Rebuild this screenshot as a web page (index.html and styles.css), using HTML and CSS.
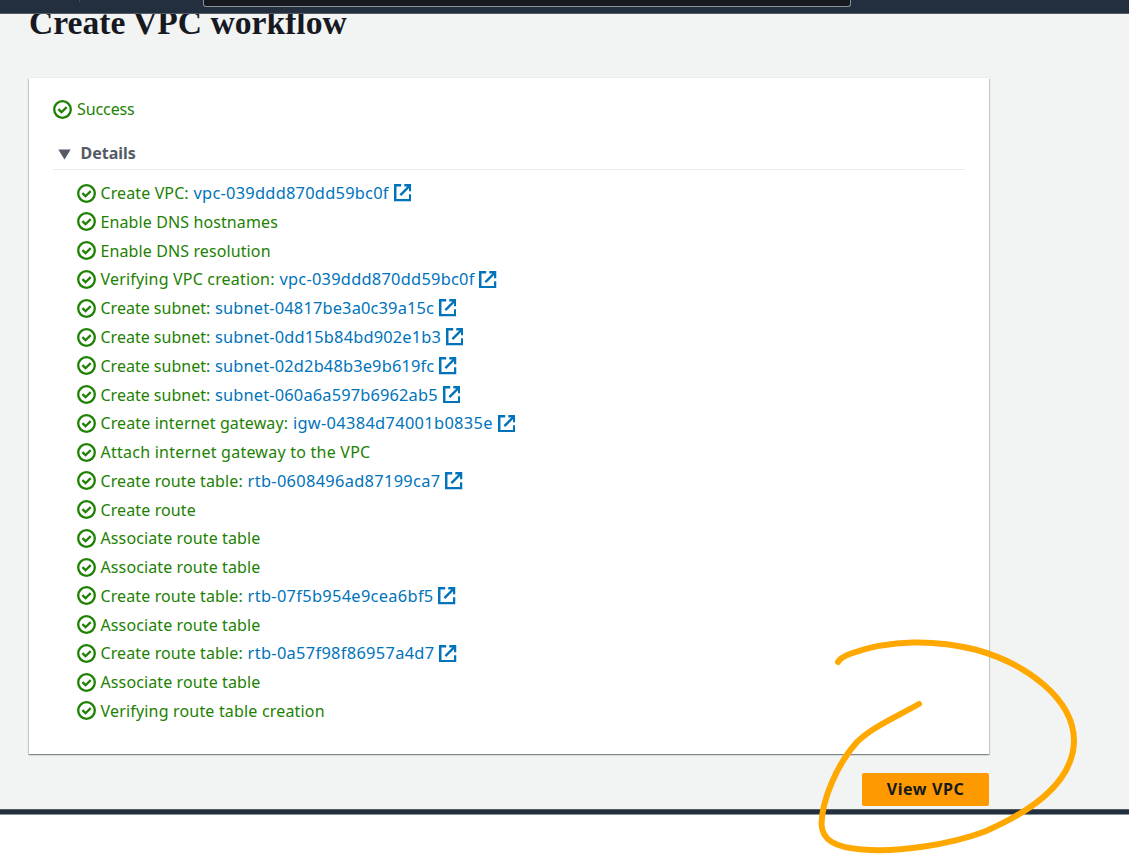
FILE: index.html
```
<!DOCTYPE html>
<html lang="en">
<head>
<meta charset="utf-8">
<title>Create VPC workflow</title>
<link rel="stylesheet" href="styles.css">
</head>
<body>
<svg class="defs" aria-hidden="true">
  <symbol id="ok" viewBox="0 0 19 19"><circle cx="9.5" cy="9.5" r="8.3"/><path d="M5.4 9.2l3.1 3 5.2-5.1"/></symbol>
  <symbol id="ext" viewBox="0 0 17 17"><path d="M7 1.2H1.2v14.6h14.6V10"/><path d="M10 1.2h5.8V7M15.3 1.7L6.2 10.8"/></symbol>
</svg>
<div class="window">
  <header class="topbar"><span class="divider"></span><div class="search"></div></header>
  <main class="content">
    <h1 class="title">Create VPC workflow</h1>
    <section class="card">
      <div class="status"><svg class="ok"><use href="#ok"/></svg><span>Success</span></div>
      <div class="details"><svg class="caret" viewBox="0 0 13 11"><path d="M.3.5h12.4L6.5 10.5z"/></svg><span>Details</span></div>
      <ul class="steps">
        <li><svg class="ok"><use href="#ok"/></svg><span>Create VPC:</span><a class="link">vpc-039ddd870dd59bc0f</a><svg class="ext"><use href="#ext"/></svg></li>
        <li><svg class="ok"><use href="#ok"/></svg><span>Enable DNS hostnames</span></li>
        <li><svg class="ok"><use href="#ok"/></svg><span>Enable DNS resolution</span></li>
        <li class="wide"><svg class="ok"><use href="#ok"/></svg><span>Verifying VPC creation:</span><a class="link">vpc-039ddd870dd59bc0f</a><svg class="ext"><use href="#ext"/></svg></li>
        <li class="subnet"><svg class="ok"><use href="#ok"/></svg><span>Create subnet:</span><a class="link">subnet-04817be3a0c39a15c</a><svg class="ext"><use href="#ext"/></svg></li>
        <li class="subnet"><svg class="ok"><use href="#ok"/></svg><span>Create subnet:</span><a class="link">subnet-0dd15b84bd902e1b3</a><svg class="ext"><use href="#ext"/></svg></li>
        <li class="subnet"><svg class="ok"><use href="#ok"/></svg><span>Create subnet:</span><a class="link">subnet-02d2b48b3e9b619fc</a><svg class="ext"><use href="#ext"/></svg></li>
        <li class="subnet"><svg class="ok"><use href="#ok"/></svg><span>Create subnet:</span><a class="link">subnet-060a6a597b6962ab5</a><svg class="ext"><use href="#ext"/></svg></li>
        <li class="gateway"><svg class="ok"><use href="#ok"/></svg><span>Create internet gateway:</span><a class="link">igw-04384d74001b0835e</a><svg class="ext"><use href="#ext"/></svg></li>
        <li class="wider"><svg class="ok"><use href="#ok"/></svg><span>Attach internet gateway to the VPC</span></li>
        <li class="route"><svg class="ok"><use href="#ok"/></svg><span>Create route table:</span><a class="link">rtb-0608496ad87199ca7</a><svg class="ext"><use href="#ext"/></svg></li>
        <li><svg class="ok"><use href="#ok"/></svg><span>Create route</span></li>
        <li><svg class="ok"><use href="#ok"/></svg><span>Associate route table</span></li>
        <li><svg class="ok"><use href="#ok"/></svg><span>Associate route table</span></li>
        <li class="route"><svg class="ok"><use href="#ok"/></svg><span>Create route table:</span><a class="link">rtb-07f5b954e9cea6bf5</a><svg class="ext"><use href="#ext"/></svg></li>
        <li><svg class="ok"><use href="#ok"/></svg><span>Associate route table</span></li>
        <li class="route"><svg class="ok"><use href="#ok"/></svg><span>Create route table:</span><a class="link">rtb-0a57f98f86957a4d7</a><svg class="ext"><use href="#ext"/></svg></li>
        <li><svg class="ok"><use href="#ok"/></svg><span>Associate route table</span></li>
        <li class="wide"><svg class="ok"><use href="#ok"/></svg><span>Verifying route table creation</span></li>
      </ul>
    </section>
    <div class="actions"><button class="primary">View VPC</button></div>
  </main>
  <footer class="footer"></footer>
</div>
<svg class="marker" viewBox="800 630 329 225"><path d="M838 662C840.500 657.500 846 655.500 851 653.500C890 639.500 935 639.500 975 649.500C1025 663 1074 698 1074 741C1073 786 1025 814 985 831.500C950 844.500 899 852.500 862 849.500C835 847.500 822 840 821.500 824C822 800 837 764 857 742C871 728 892 719 919 704"/></svg>
</body>
</html>
```
FILE: styles.css
```
* { box-sizing: border-box; }
body { margin: 0; height: 855px; overflow: hidden; background: #fff; font-family: "Noto Sans", sans-serif; font-size: 16px; color: #16191f; }
.defs { display: none; }
.window { display: flex; flex-direction: column; height: 815px; background: #f2f3f3; }
.topbar { position: relative; z-index: 1; display: flex; flex: none; height: 14px; background: #232f3e; border-bottom: 1px solid #545b64; }
.divider { width: 1px; height: 2px; margin-left: 79px; background: #414d5c; }
.search { width: 648px; height: 7px; margin-left: 123px; background: #16191f; border: 1px solid #879596; border-top: 0; border-radius: 0 0 3px 3px; }
.content { flex: 1; min-height: 0; width: 989px; padding-left: 29px; }
.title { margin: -10px 0 0; height: 74px; font: bold 33.6px/38px "Liberation Serif", serif; font-variant-ligatures: none; white-space: nowrap; }
.card { height: 676px; padding: 17px 24px 0; background: #fff; box-shadow: 0 1px 1px rgba(0,28,36,.3), 1px 1px 1px rgba(0,28,36,.15), -1px 1px 1px rgba(0,28,36,.15), 0 -1px 0 #eaeded; }
.status, .steps li { display: flex; align-items: center; height: 28.8px; color: #1d8102; letter-spacing: -.1px; white-space: nowrap; }
.steps li { height: 28.78px; letter-spacing: .11px; line-height: 22px; }
.steps .wide { letter-spacing: .18px; }
.steps .wider { letter-spacing: .24px; }
.steps .subnet { letter-spacing: 0; }
.ok { flex: none; width: 19px; height: 19px; margin-right: 5px; fill: none; stroke: #1d8102; stroke-width: 2.3; }
.steps .ok { margin-right: 4.5px; }
.details { display: flex; align-items: center; height: 46px; padding: 13px 0 0 5px; border-bottom: 1px solid #eaeded; color: #545b64; font-weight: 700; }
.caret { width: 13px; height: 11px; margin: 3px 9.5px 0 0; fill: #545b64; }
.steps { margin: 0; padding: 9px 0 0 24px; list-style: none; }
.link { margin-left: 4.8px; color: #0073bb; font-size: 16.4px; letter-spacing: .25px; }
.subnet .link { letter-spacing: .16px; }
.gateway .link { letter-spacing: .32px; }
.route .link { letter-spacing: .31px; }
.ext { flex: none; width: 17.5px; height: 17.5px; margin-left: 4.8px; fill: none; stroke: #0073bb; stroke-width: 2.4; }
.actions { display: flex; justify-content: flex-end; padding-top: 19px; }
.primary { width: 127px; height: 33px; padding: 0 0 1px; border: 0; border-radius: 2px; background: #ff9900; color: #16191f; font: bold 16px/31px "Noto Sans", sans-serif; letter-spacing: .6px; }
.footer { flex: none; height: 6px; background: #232f3e; border-top: 1px solid #545b64; border-bottom: 1px solid #879596; }
.marker { position: absolute; left: 800px; top: 630px; z-index: 2; width: 329px; height: 225px; fill: none; stroke: #ffa800; stroke-width: 6; stroke-linecap: round; stroke-linejoin: round; }
```
